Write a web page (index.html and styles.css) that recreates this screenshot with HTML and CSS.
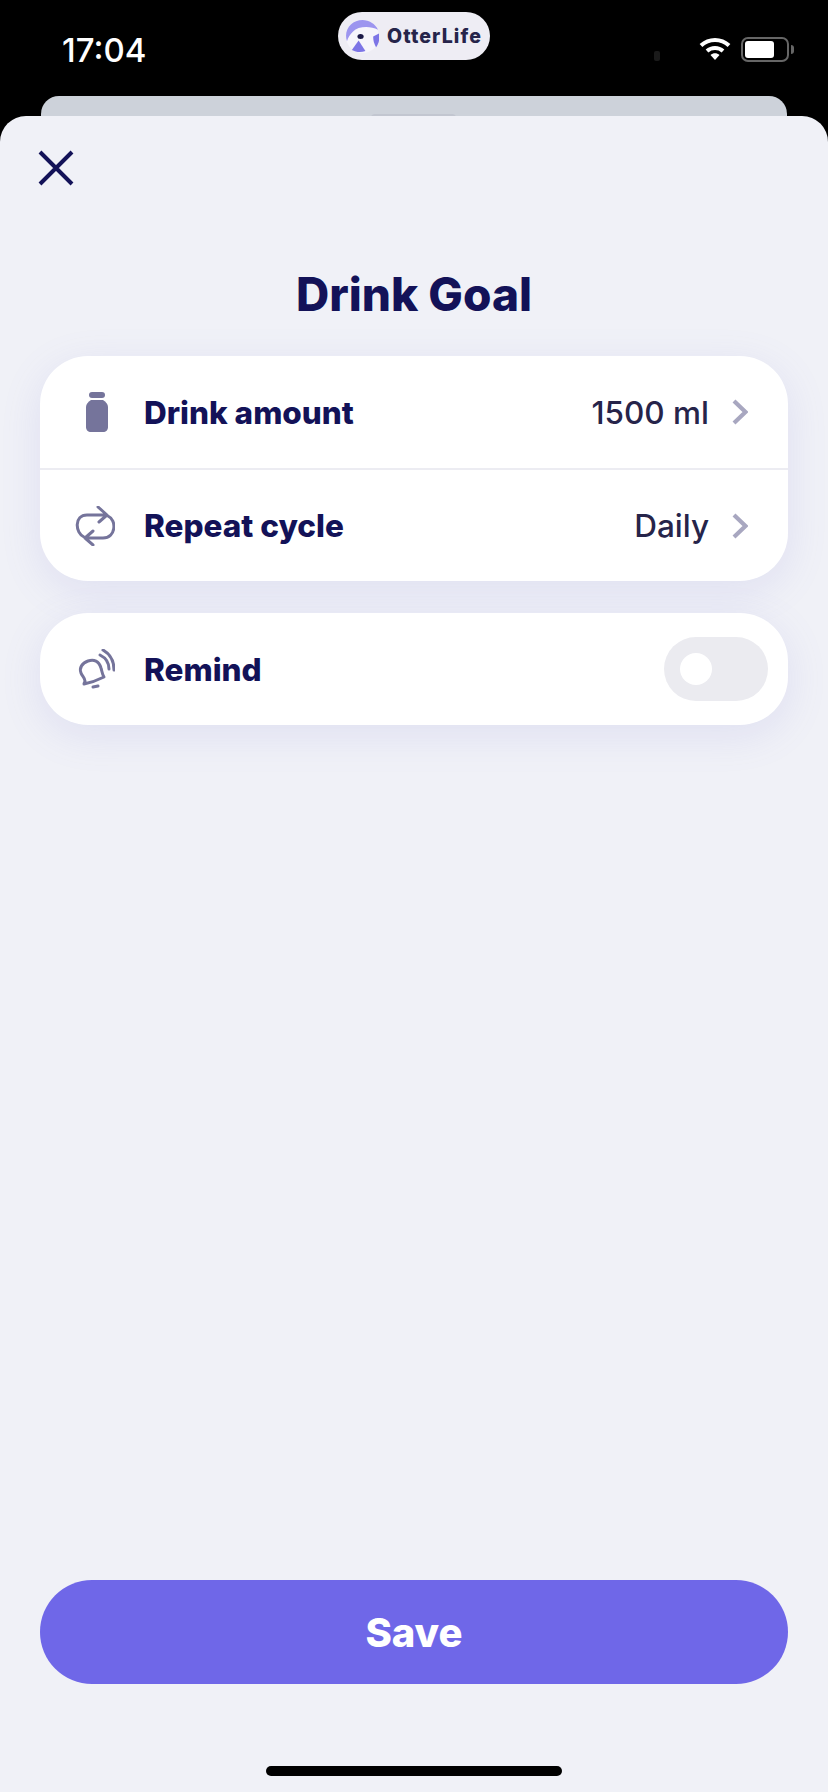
FILE: index.html
```html
<!DOCTYPE html>
<html lang="en">
<head>
    <meta charset="UTF-8">
    <meta name="viewport" content="width=device-width, initial-scale=1.0">
    <title>Drink Goal</title>
    <link rel="stylesheet" href="styles.css">
</head>
<body>
    <div class="status-bar">
        <span class="time">17:04</span>
        <div class="app-pill">
            <svg class="app-logo" viewBox="0 0 34 34">
                <circle cx="17" cy="17" r="17" fill="#f6f5fb"/>
                <path d="M1 22 C-3 10 6 0 17 0 C24 0 30 4 33 10 C25 6 13 6 7 12 C4 15 2 18 1 22 Z" fill="#9c95ef"/>
                <path d="M6 31 L13 21 L20 32 C15 34 10 33 6 31 Z" fill="#7d75e6"/>
                <path d="M28 17 L34 14 C35 19 34 24 31 28 C29 25 28 21 28 17 Z" fill="#7d75e6"/>
                <ellipse cx="15" cy="17" rx="3.200" ry="2.600" fill="#1c1a48"/>
            </svg>
            <span class="app-name">OtterLife</span>
        </div>
        <span class="cam-dot"></span>
        <svg class="wifi" viewBox="0 0 32 24">
            <path d="M2 8.500 C10 1 22 1 30 8.500" fill="none" stroke="#fff" stroke-width="4"/>
            <path d="M8 14 C12.500 10 19.500 10 24 14" fill="none" stroke="#fff" stroke-width="4"/>
            <path d="M11.500 18 L16 23 L20.500 18 C18 15.800 14 15.800 11.500 18 Z" fill="#fff"/>
        </svg>
        <div class="battery">
            <span class="battery-level"></span>
        </div>
        <span class="battery-tip"></span>
    </div>

    <div class="back-card"><span class="back-handle"></span></div>

    <main class="sheet">
        <button class="close-btn" aria-label="Close">
            <svg viewBox="0 0 36 36" width="36" height="36">
                <path d="M2 2 L34 34 M34 2 L2 34" stroke="#131258" stroke-width="4" fill="none"/>
            </svg>
        </button>

        <h1>Drink Goal</h1>

        <section class="card">
            <div class="row">
                <span class="row-icon">
                    <svg viewBox="0 0 40 40" width="40" height="40">
                        <rect x="14" y="0" width="16" height="6" rx="3" fill="#75749b"/>
                        <path d="M16 8 H28 C31 10 33 12 33 15 V35 C33 38 31 40 28 40 H16 C13 40 11 38 11 35 V15 C11 12 13 10 16 8 Z" fill="#75749b"/>
                    </svg>
                </span>
                <span class="row-label">Drink amount</span>
                <span class="row-value">1500 ml</span>
                <svg class="chevron" viewBox="0 0 16 26">
                    <path d="M2 2 L13.500 13 L2 24" fill="none" stroke="#a8a7c0" stroke-width="4.200"/>
                </svg>
            </div>
            <div class="row row-border">
                <span class="row-icon">
                    <svg viewBox="0 0 40 40" width="40" height="40">
                        <path d="M9 31 C0 27 -1 9 12 9 H32 M23 1 L32 9 L24 16 M33 10 C42 14 41 32 28 32 H10 M18 25 L10 32 L18 39" fill="none" stroke="#75749b" stroke-width="3" stroke-linecap="round" stroke-linejoin="round"/>
                    </svg>
                </span>
                <span class="row-label">Repeat cycle</span>
                <span class="row-value">Daily</span>
                <svg class="chevron" viewBox="0 0 16 26">
                    <path d="M2 2 L13.500 13 L2 24" fill="none" stroke="#a8a7c0" stroke-width="4.200"/>
                </svg>
            </div>
        </section>

        <section class="card">
            <div class="row">
                <span class="row-icon">
                    <svg viewBox="0 0 40 40" width="40" height="40">
                        <g fill="none" stroke="#75749b" stroke-width="3" stroke-linecap="round" stroke-linejoin="round">
                            <path d="M9 35 C14 34 23 31 29 28 C27 25 27 22 26 19 C24 12 19 10 13 12 C7 14 4 19 6 24 C7 27 10 29 10 32 C10 33 9 34 9 35 Z"/>
                            <path d="M18 38 L23 37"/>
                            <path d="M25 6 C31 9 34 14 34 20"/>
                            <path d="M28 1 C35 5 39 11 39 21"/>
                        </g>
                    </svg>
                </span>
                <span class="row-label">Remind</span>
                <span class="toggle"><span class="knob"></span></span>
            </div>
        </section>

        <button class="save-btn">Save</button>
        <div class="home-bar"></div>
    </main>
</body>
</html>
```

FILE: styles.css
```css
* {
    box-sizing: border-box;
}
html, body {
    margin: 0;
    padding: 0;
}
body {
    width: 828px;
    height: 1792px;
    overflow: hidden;
    background-color: #000;
    font-family: Inter, "Noto Sans", sans-serif;
    position: relative;
}
.status-bar {
    height: 96px;
    position: relative;
    color: #fff;
}
.time {
    position: absolute;
    left: 62px;
    top: 30px;
    font-size: 33px;
    font-weight: 500;
    line-height: 40px;
}
.app-pill {
    position: absolute;
    left: 338px;
    top: 12px;
    width: 152px;
    height: 48px;
    border-radius: 24px;
    background-color: #eeedf4;
    display: flex;
    align-items: center;
    padding-left: 8px;
    gap: 8px;
}
.app-logo {
    width: 33px;
    height: 33px;
}
.app-name {
    font-size: 19.500px;
    font-weight: 800;
    letter-spacing: 1.100px;
    color: #26244a;
}
.cam-dot {
    position: absolute;
    left: 654px;
    top: 51px;
    width: 6px;
    height: 10px;
    border-radius: 2px;
    background-color: #1a1a1a;
}
.wifi {
    position: absolute;
    left: 699px;
    top: 37px;
    width: 32px;
    height: 24px;
}
.battery {
    position: absolute;
    left: 741px;
    top: 37px;
    width: 48px;
    height: 25px;
    border: 2px solid #666;
    border-radius: 7px;
    padding: 2px;
}
.battery-level {
    display: block;
    width: 29px;
    height: 17px;
    border-radius: 3px;
    background-color: #fff;
}
.battery-tip {
    position: absolute;
    left: 791px;
    top: 45px;
    width: 3px;
    height: 9px;
    border-radius: 0 3px 3px 0;
    background-color: #666;
}
.back-card {
    position: absolute;
    left: 41px;
    top: 96px;
    width: 746px;
    height: 40px;
    border-radius: 18px 18px 0 0;
    background-color: #cdd2da;
}
.back-handle {
    position: absolute;
    left: 330px;
    top: 18px;
    width: 85px;
    height: 4px;
    border-radius: 4px 4px 0 0;
    background-color: #c2c6d0;
}
.sheet {
    position: absolute;
    left: 0;
    top: 116px;
    width: 828px;
    height: 1676px;
    border-radius: 26px 26px 0 0;
    background-color: #f0f1f7;
    padding: 34px 40px 0;
    display: flex;
    flex-direction: column;
}
.close-btn {
    width: 36px;
    height: 36px;
    margin-left: -2px;
    padding: 0;
    border: none;
    background: none;
}
h1 {
    margin: 76px 0 0;
    height: 64px;
    font-size: 46px;
    line-height: 64px;
    font-weight: 800;
    text-align: center;
    color: #131258;
}
.card {
    background-color: #fff;
    border-radius: 48px;
    box-shadow: 0 10px 40px rgba(120, 120, 210, 0.14);
    margin-bottom: 32px;
}
h1 + .card {
    margin-top: 30px;
}
.row {
    height: 112px;
    display: flex;
    align-items: center;
    padding-left: 35px;
    padding-right: 40px;
}
.row-border {
    height: 113px;
    border-top: 2px solid #ececf2;
}
.row-icon {
    width: 40px;
    height: 40px;
    margin-right: 29px;
}
.row-label {
    flex: 1;
    font-size: 31.500px;
    font-weight: 800;
    color: #131258;
}
.row-value {
    font-size: 31.500px;
    font-weight: 500;
    color: #26244a;
    margin-right: 23px;
}
.chevron {
    width: 16px;
    height: 26px;
}
.toggle {
    width: 104px;
    height: 64px;
    margin-right: -20px;
    border-radius: 32px;
    background-color: #ebebf0;
    padding: 16px;
}
.knob {
    display: block;
    width: 32px;
    height: 32px;
    border-radius: 50%;
    background-color: #fff;
}
.save-btn {
    margin-top: auto;
    height: 104px;
    border: none;
    border-radius: 52px;
    background-color: #6f67e8;
    color: #fff;
    font-family: inherit;
    font-size: 40px;
    font-weight: 800;
}
.home-bar {
    width: 296px;
    height: 10px;
    border-radius: 5px;
    background-color: #000;
    margin: 82px auto 16px;
}
```
